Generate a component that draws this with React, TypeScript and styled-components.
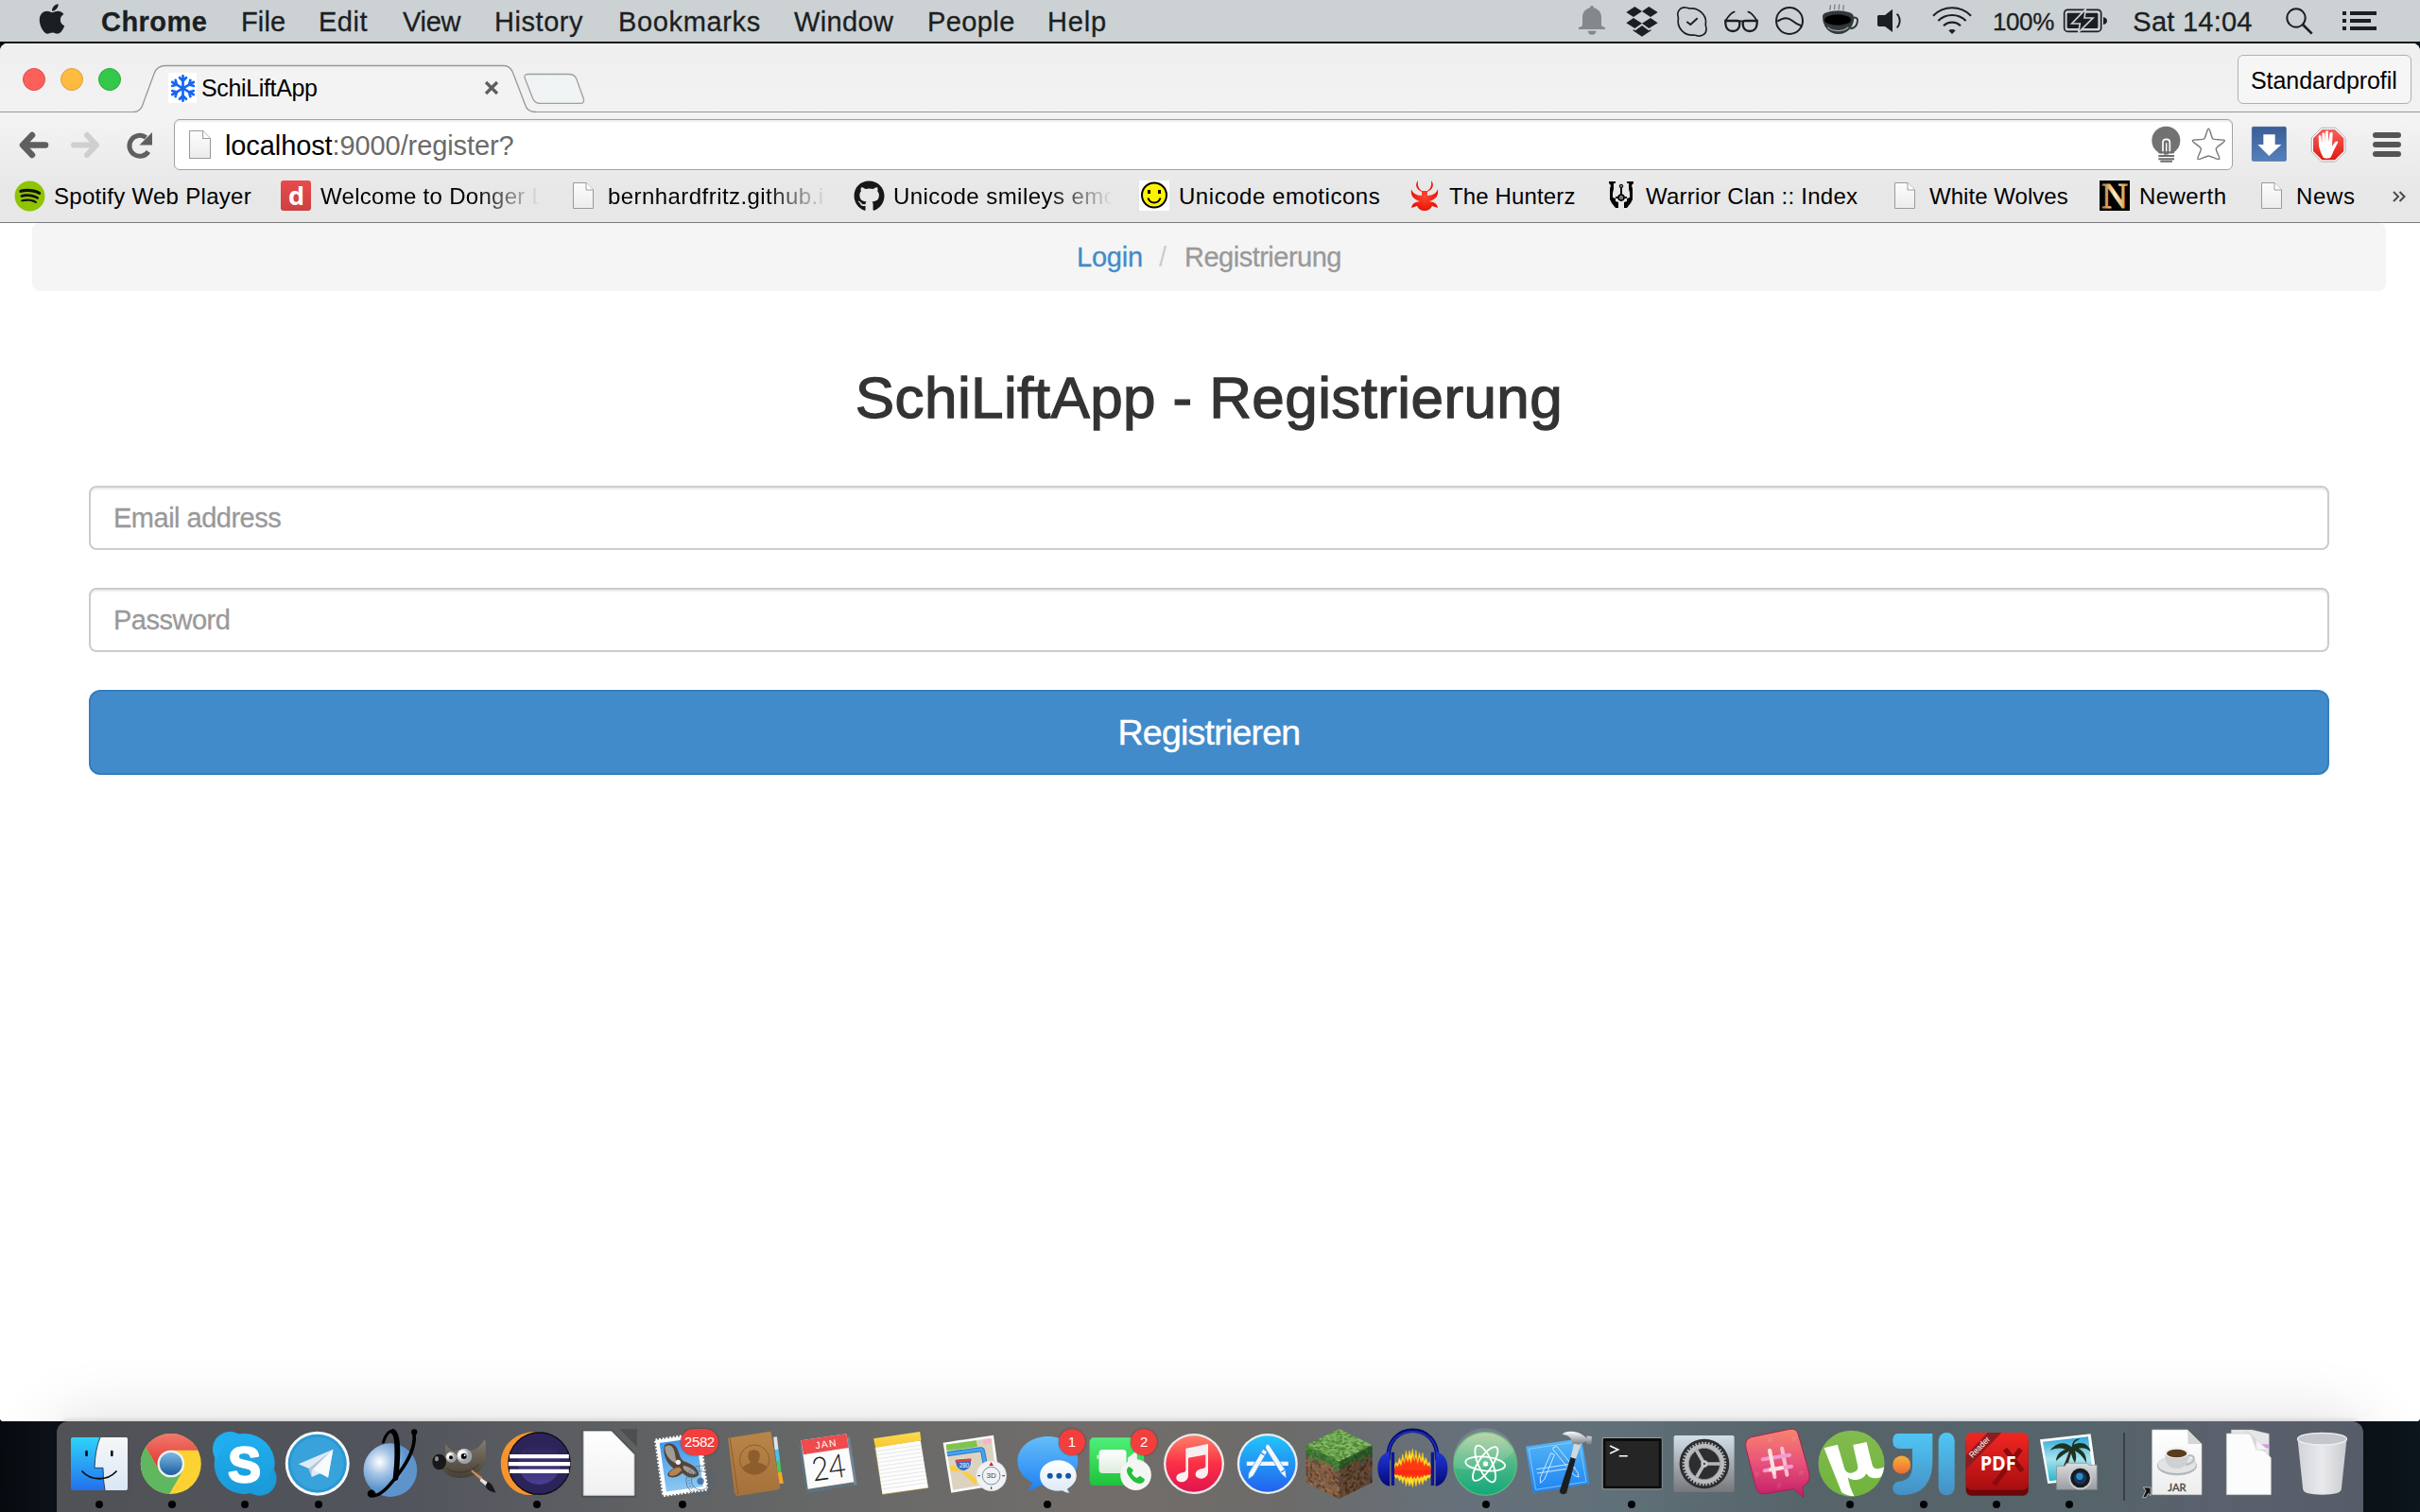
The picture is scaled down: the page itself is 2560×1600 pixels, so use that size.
import React from 'react';
import styled, { createGlobalStyle, css } from 'styled-components';
import { FaApple, FaGithub, FaSpotify, FaRegSnowflake } from 'react-icons/fa';

const GlobalStyle = createGlobalStyle`
  * { box-sizing: border-box; }
  html, body { margin: 0; padding: 0; overflow: hidden; }
  body { font-family: 'Liberation Sans', Arial, sans-serif; background: #0a0f15; }
`;

const Desktop = styled.div`
  width: 2560px;
  height: 1600px;
  display: flex;
  flex-direction: column;
  background: linear-gradient(90deg, #070b10 0, #0c1218 50px, #0c1218 2500px, #0c161c 2560px);
  overflow: hidden;
`;

/* ---------- menu bar ---------- */

const MenuBar = styled.header`
  height: 44px;
  flex: none;
  display: flex;
  align-items: center;
  margin-bottom: 2px;
  background: #ccd1d4;
  color: #1b1f22;
`;
const AppleSlot = styled.div`
  width: 107px;
  height: 44px;
  flex: none;
  display: flex;
  padding: 2px 0 0 37px;
`;
const MenuItem = styled.span<{ $w: number; $ls: number; $bold?: boolean }>`
  width: ${p => p.$w}px;
  flex: none;
  padding-top: 1px;
  font-size: 29px;
  line-height: 44px;
  font-weight: ${p => (p.$bold ? 700 : 400)};
  letter-spacing: ${p => p.$ls}px;
  white-space: nowrap;
  -webkit-text-stroke: 0.300px #1b1f22;
`;
const StatusArea = styled.div`
  display: flex;
  align-items: center;
  margin-left: auto;
  width: 894px;
`;
const StatusSvg = styled.svg`
  display: block;
  flex: none;
  height: 44px;
`;
const StatusText = styled.span<{ $w: number; $size: number; $ls?: number; $pad?: number }>`
  width: ${p => p.$w}px;
  flex: none;
  padding: 1px 0 0 ${p => p.$pad || 0}px;
  font-size: ${p => p.$size}px;
  line-height: 44px;
  letter-spacing: ${p => p.$ls || 0}px;
  white-space: nowrap;
  -webkit-text-stroke: 0.300px #1b1f22;
`;

const Status = ({ x, w, children }: { x: number; w: number; children: React.ReactNode }) => (
  <StatusSvg width={w / 3} viewBox={`${x} 0 ${w} 132`}>{children}</StatusSvg>
);

const INK = '#1b1f22';

const StatusIcons = () => (
  <>
    <Status x={78} w={150}>
      <path fill="#82888b" d="M132 18c4 0 6 3 6 7 15 4 24 15 24 30v24c0 5 5 7 12 8v6H90v-6c7-1 12-3 12-8V55c0-15 9-26 24-30 0-4 2-7 6-7ZM119 98h27c-1 7-6 12-13.500 12S120 105 119 98Z" />
    </Status>
    <Status x={228} w={144}>
      <path fill={INK} d="M268 21 291 36 264 54 241 39ZM313 21 341 39 318 54 291 36ZM241 73 264 57 291 74 268 90ZM341 73 318 57 291 74 313 90ZM264 94 270 97 291 81 312 97 320 94V97L291 116 262 97Z" />
    </Status>
    <Status x={372} w={153}>
      <path fill="none" stroke={INK} strokeWidth="5" d="M405 51C401 35 414 22 430 24C436 24 438 27 443 27C472 24 497 49 493 75C492 82 495 84 495 92C495 107 483 116 469 114C464 114 462 111 456 111C427 115 402 90 406 61C407 57 406 55 405 51Z" />
      <path fill="none" stroke={INK} strokeWidth="6" d="m433 69 12 9 22-20" />
    </Status>
    <Status x={525} w={162}>
      <g fill="none" stroke={INK}>
        <path strokeWidth="7" d="M556 66h37c8 0 8 4 8 9 0 15-9 24-22 24s-22-9-23-24ZM656 66h-37c-8 0-8 4-8 9 0 15 9 24 22 24s22-9 23-24Z" />
        <path strokeWidth="5.500" d="M556 66c8-13 19-28 30-29M656 66c-8-13-19-28-30-29M598 67h16" />
      </g>
    </Status>
    <Status x={687} w={153}>
      <circle cx="759" cy="66" r="42" fill="none" stroke={INK} strokeWidth="6" />
      <path fill="none" stroke={INK} strokeWidth="6" d="M721 68c14-10 32-14 46-3 10 8 16 12 30 17" />
    </Status>
    <Status x={840} w={165}>
      <path fill="none" stroke="#777d80" strokeWidth="4" d="M889 32c-6-6 4-9-1-16M903 30c-6-6 4-9-1-16M917 30c-6-6 4-9-1-16M931 32c-6-6 4-9-1-16" />
      <path fill="#32373a" d="M864 53h100c0 28-18 55-50 55s-50-27-50-55Z" />
      <ellipse cx="913" cy="51" rx="49" ry="17" fill="#32373a" />
      <ellipse cx="912" cy="63" rx="42" ry="17" fill="#000" />
      <path fill="none" stroke="#9da2a5" strokeWidth="4" d="M880 86c12 15 50 16 66 0" />
      <path fill="none" stroke="#32373a" strokeWidth="6" d="M960 56c14-2 17 5 14 16-3 13-12 18-22 19" />
    </Status>
    <Status x={1005} w={159}>
      <path fill={INK} d="M1044 48h18l24-19v73l-24-18h-18c-4 0-6-2-6-6V54c0-4 2-6 6-6Z" />
      <path fill="none" stroke={INK} strokeWidth="5.500" d="M1100 44c12 12 12 32 0 44" />
    </Status>
    <Status x={1164} w={201}>
      <g fill="none" stroke={INK} strokeWidth="6.500">
        <path d="M1215 50a84 84 0 0 1 120 0M1231 66a63 63 0 0 1 88 0M1248 82a38 38 0 0 1 54 0" />
      </g>
      <path fill={INK} d="M1264 97c6-5 15-5 22 0l-11 11Z" />
    </Status>
  </>
);

/* ---------- browser window ---------- */

const BrowserWindow = styled.main`
  height: 1458px;
  flex: none;
  display: flex;
  flex-direction: column;
  background: #fff;
  border-radius: 8px 8px 4px 4px;
  overflow: hidden;
`;
const TabStrip = styled.div`
  height: 73px;
  flex: none;
  display: flex;
  align-items: flex-start;
  background: linear-gradient(#efefef, #f2f2f2);
  box-shadow: inset 0 1px #f8f8f8, inset 0 -1px #989898;
`;
const Lights = styled.div`
  display: flex;
  gap: 16px;
  padding: 26px 0 0 24px;
  width: 143px;
  flex: none;
`;
const Light = styled.span<{ $c: string; $b: string }>`
  width: 24px;
  height: 24px;
  border-radius: 50%;
  background: ${p => p.$c};
  border: 1px solid ${p => p.$b};
`;
const Tab = styled.div`
  position: relative;
  width: 411px;
  height: 73px;
  flex: none;
  display: flex;
  align-items: center;
  padding: 21px 0 0 35px;
`;
const TabShape = styled.svg`
  position: absolute;
  left: 0;
  top: 23px;
  overflow: visible;
`;
const Favicon = styled.span`
  position: relative;
  width: 30px;
  height: 32px;
  display: flex;
  align-items: center;
  justify-content: center;
  background: #fff;
  color: #1567f3;
`;
const TabTitle = styled.span`
  position: relative;
  width: 304px;
  padding: 1px 0 0 5px;
  font-size: 25px;
  letter-spacing: -0.350px;
  color: #000;
`;
const CloseSvg = styled.svg`
  position: relative;
`;
const ProfileButton = styled.button`
  width: 184px;
  height: 52px;
  margin: 12px 9px 0 auto;
  padding: 3px 0 0 13px;
  border: 1px solid #b0b0b0;
  border-radius: 6px;
  background: #f6f6f6;
  font: 25px 'Liberation Sans', Arial, sans-serif;
  letter-spacing: -0.070px;
  text-align: left;
  color: #000;
`;
const Chrome = styled.div`
  height: 117px;
  flex: none;
  display: flex;
  flex-direction: column;
  background: linear-gradient(#f3f3f3 0, #f3f3f3 8px, #e7e7e7 85px, #e8e8e8);
  border-bottom: 1px solid #7b7b7b;
`;
const NavBar = styled.div`
  display: flex;
  align-items: center;
  padding-top: 7px;
  height: 61px;
  flex: none;
`;
const NavSvg = styled.svg`
  display: block;
  flex: none;
`;
const Extensions = styled.div`
  display: flex;
  margin-left: 4px;
`;
const Omnibox = styled.div`
  width: 2178px;
  height: 54px;
  display: flex;
  align-items: center;
  padding: 0 7px 0 15px;
  background: #fff;
  border: 1px solid #a2a2a2;
  border-radius: 6px;
  box-shadow: inset 0 2px 1px #eee;
`;
const Url = styled.span`
  margin: 2px auto 0 15px;
  font-size: 29px;
  letter-spacing: -0.100px;
  color: #6a6a6a;
  b { font-weight: 400; color: #000; }
`;
const BookmarkBar = styled.nav`
  display: flex;
  height: 55px;
  align-items: center;
  padding-left: 15px;
`;
const Bookmark = styled.a<{ $w: number }>`
  width: ${p => p.$w}px;
  height: 34px;
  flex: none;
  display: flex;
  align-items: center;
  gap: 10px;
  margin-top: -1px;
`;
const BookmarkIcon = styled.span<{ $bg?: string; $radius?: number }>`
  width: 32px;
  height: 32px;
  flex: none;
  display: flex;
  align-items: center;
  justify-content: center;
  background: ${p => p.$bg || 'transparent'};
  border-radius: ${p => p.$radius || 0}px;
  svg { overflow: visible; }
`;
const BookmarkLabel = styled.span<{ $ls: number; $fade?: boolean }>`
  padding-top: 2px;
  font-size: 24px;
  letter-spacing: ${p => p.$ls - 0.46}px;
  white-space: nowrap;
  color: #000;
  ${p => p.$fade && css`
    width: 232px;
    mask-image: linear-gradient(90deg, #000 165px, transparent 232px);
  `}
`;

const PageIcon = ({ w = 22, h = 28 }: { w?: number; h?: number }) => (
  <svg width={w} height={h} viewBox="0 0 22 28" preserveAspectRatio="none">
    <defs>
      <linearGradient id="pg" x2="0" y2="1"><stop stopColor="#fdfdfd" /><stop offset="1" stopColor="#ececec" /></linearGradient>
    </defs>
    <path d="M.5.5H14L21.500 8V27.500H.5Z" fill="url(#pg)" stroke="#9a9a9a" />
    <path d="M14 .5V8H21.500" fill="#fff" stroke="#9a9a9a" />
  </svg>
);

const bookmarks: { w: number; ls: number; label: string; fade?: boolean; icon: React.ReactNode; bg?: string; radius?: number }[] = [
  { w: 282, ls: 0.76, label: 'Spotify Web Player', icon: <FaSpotify size={33} color="#8fc400" />, bg: 'radial-gradient(#111 60%, transparent 62%)', radius: 16 },
  {
    w: 304, ls: 0.75, label: 'Welcome to Donger L', fade: true, bg: 'linear-gradient(#e84b4b, #cc4141)', radius: 3,
    icon: <svg width="32" height="32"><text x="16.500" y="26" textAnchor="middle" fontFamily="Open Sans, sans-serif" fontWeight="700" fontSize="27" fill="#fff">d</text></svg>,
  },
  { w: 302, ls: 0.9, label: 'bernhardfritz.github.i', fade: true, icon: <PageIcon /> },
  { w: 302, ls: 0.9, label: 'Unicode smileys emo', fade: true, icon: <FaGithub size={33} color="#181616" /> },
  {
    w: 286, ls: 1, label: 'Unicode emoticons', bg: '#fff',
    icon: (
      <svg width="32" height="32">
        <circle cx="16" cy="15.500" r="13" fill="#fff200" stroke="#000" strokeWidth="2" />
        <path d="M9.500 18.500c2 6.500 11 6.500 13 0" fill="none" stroke="#000" strokeWidth="2" />
        <path d="M9 10h3v4H9zM20 10h3v4h-3z" />
      </svg>
    ),
  },
  {
    w: 208, ls: 0.6, label: 'The Hunterz',
    icon: (
      <svg width="32" height="32">
        <defs><radialGradient id="hz"><stop stopColor="#ff4a34" /><stop offset="1" stopColor="#ea1406" /></radialGradient></defs>
        <path fill="url(#hz)" d="M9 0C5 5 8 10 13 12V16C7 16 3 13 2 9C1 16 4 20 11 22C6 23 3 24 2 29L8 27C10 31 13 32 16 32S22 31 24 27L30 29C29 24 26 23 21 22C28 20 31 16 30 9C29 13 25 16 19 16V12C24 10 27 5 23 0C24 7 21 9 19 11H13C11 9 8 7 9 0Z" />
      </svg>
    ),
  },
  {
    w: 300, ls: 0.7, label: 'Warrior Clan :: Index',
    icon: (
      <svg width="32" height="32" viewBox="-2 0 32 32">
        <path d="M1 1h7v2H6v6l-1 4v5l3 1v3l3 1v6H8l-4-5-2-4V9l1-4-2-2ZM27 1h-7v2h2v6l1 4v5l-3 1v3l-3 1v6h3l4-5 2-4V9l-1-4 2-2Z" />
        <path d="M14 4v18M8 18h12" stroke="#000" strokeWidth="2" />
        <circle cx="14" cy="18" r="3" fill="#777" stroke="#000" strokeWidth="1.500" />
        <circle cx="14" cy="6" r="1.800" fill="#777" stroke="#000" />
      </svg>
    ),
  },
  { w: 222, ls: 0.5, label: 'White Wolves', icon: <PageIcon /> },
  {
    w: 166, ls: 0.9, label: 'Newerth', bg: '#000',
    icon: (
      <svg width="32" height="32">
        <defs><linearGradient id="nw"><stop stopColor="#b0621c" /><stop offset=".5" stopColor="#fff3c0" /><stop offset="1" stopColor="#c98a38" /></linearGradient></defs>
        <text x="16" y="28.500" textAnchor="middle" fontFamily="Liberation Serif, serif" fontSize="38" textLength="28" lengthAdjust="spacingAndGlyphs" fill="url(#nw)" stroke="url(#nw)">N</text>
      </svg>
    ),
  },
  { w: 144, ls: 1.1, label: 'News', icon: <PageIcon /> },
];

/* ---------- page ---------- */

const Page = styled.section`
  flex: 1;
  display: flex;
  flex-direction: column;
  padding: 0 36px 0 34px;
  background: #fff;
`;
const Breadcrumb = styled.div`
  height: 72px;
  display: flex;
  align-items: center;
  justify-content: center;
  gap: 17px;
  padding-top: 1px;
  border-radius: 8px;
  background: #f5f5f5;
  font-size: 29px;
  letter-spacing: -0.500px;
  color: #999;
  -webkit-text-stroke: 0.300px currentColor;
  a { color: #428bca; letter-spacing: -0.200px; -webkit-text-stroke: 0.300px #428bca; }
  i { font-style: normal; color: #ccc; width: 10px; -webkit-text-stroke: 0; }
`;
const Form = styled.form`
  display: flex;
  flex-direction: column;
  gap: 40px;
  padding: 80px 60px 0;
`;
const Heading = styled.h1`
  margin: 0 0 20px;
  font-size: 62px;
  line-height: 66px;
  font-weight: 400;
  letter-spacing: 0.400px;
  text-align: center;
  color: #333;
  -webkit-text-stroke: 1.300px #333;
`;
const Field = styled.input`
  height: 68px;
  width: 100%;
  padding: 1px 24px 0;
  border: 2px solid #ccc;
  border-radius: 8px;
  box-shadow: inset 0 2px 2px rgba(0, 0, 0, 0.075);
  font: 29px 'Liberation Sans', Arial, sans-serif;
  letter-spacing: -0.500px;
  &::placeholder { color: #999; opacity: 1; -webkit-text-stroke: 0.300px #999; }
`;
const Submit = styled.button`
  height: 90px;
  padding-top: 2px;
  border: 2px solid #357ebd;
  border-radius: 12px;
  background: #428bca;
  color: #fff;
  font: 37.500px 'Liberation Sans', Arial, sans-serif;
  letter-spacing: -0.770px;
  -webkit-text-stroke: 0.400px #fff;
`;

/* ---------- dock ---------- */

const DockArea = styled.footer`
  flex: 1;
  display: flex;
  padding: 0 60px;
`;
const Dock = styled.div`
  position: relative;
  flex: 1;
  display: flex;
  padding-left: 6.4px;
  border-radius: 12px 12px 0 0;
  background: linear-gradient(90deg, #505256 0, #51545c 350px, #5f6163 620px, #6a6a69 900px, #726d6a 1120px, #6c6b69 1300px, #66707a 1480px, #607078 1650px, #56646a 1850px, #55646a 2150px, #5b606d 2300px, #575c69 2440px);
  box-shadow: 0 -2px 4px rgba(0, 0, 0, 0.12), 0 0 70px rgba(0, 0, 0, 0.14);
`;
const Tile = styled.div<{ $w?: number }>`
  position: relative;
  width: ${p => p.$w || 77.2}px;
  height: 96px;
  flex: none;
  display: flex;
  justify-content: center;
  svg { flex: none; overflow: visible; }
`;
const RunningDot = styled.i`
  position: absolute;
  left: calc(50% - 4px);
  top: 84px;
  width: 8px;
  height: 8px;
  border-radius: 50%;
  background: #000;
`;
const Badge = styled.b<{ $x: number; $w: number }>`
  position: absolute;
  left: ${p => p.$x}px;
  top: 8px;
  width: ${p => p.$w}px;
  height: 28px;
  border-radius: 14px;
  background: #f23e3c;
  color: #fff;
  font-size: 15px;
  font-weight: 400;
  line-height: 28px;
  letter-spacing: -0.400px;
  text-align: center;
  box-shadow: 0 0 2px rgba(0, 0, 0, 0.5);
`;
const Separator = styled.div`
  width: 2px;
  height: 72px;
  margin: 12px 15.500px 0 18px;
  background: #393e44;
`;

type GP = { id: string; a: string; b: string; c?: string; r?: boolean };
const G = ({ id, a, b, c, r }: GP) =>
  r ? (
    <radialGradient id={id} cx=".3" cy=".35"><stop stopColor={a} />{c && <stop offset=".45" stopColor={c} />}<stop offset="1" stopColor={b} /></radialGradient>
  ) : (
    <linearGradient id={id} x2="0" y2="1"><stop stopColor={a} />{c && <stop offset=".5" stopColor={c} />}<stop offset="1" stopColor={b} /></linearGradient>
  );

const Finder = () => (
  <>
    <G id="fa" a="#2ed3fb" b="#2471ee" />
    <G id="fb" a="#f5f7f8" b="#dbe7f5" />
    <rect x="225" y="93" width="180" height="168" rx="6" fill="url(#fa)" />
    <path d="M318 93H399q6 0 6 6V255q0 6-6 6H333Q327 228 327 190H300Q302 130 318 93Z" fill="url(#fb)" />
    <path d="M318 93Q302 130 300 190H327Q327 228 333 261" fill="none" stroke="#1a2a44" strokeWidth="2.500" />
    <path d="M274.500 138v12M355 138v12" stroke="#111" strokeWidth="8" strokeLinecap="round" />
    <path d="M261 201c28 31 80 31 108 0" fill="none" stroke="#111" strokeWidth="5.500" strokeLinecap="round" />
  </>
);
const ChromeIcon = () => (
  <>
    <G id="ca" a="#f0796d" b="#e0302c" />
    <G id="cb" a="#7fb8e4" b="#1c5f9e" />
    <circle cx="543" cy="177" r="96" fill="#fcd233" />
    <path d="M463 124A96 96 0 0 0 538 273L580 200 543 177 506 198Z" fill="#5fb760" />
    <path d="M543 134H629A96 96 0 0 0 463 124L506 198 543 177Z" fill="url(#ca)" />
    <circle cx="543" cy="177" r="43" fill="#f2f2f2" />
    <circle cx="543" cy="177" r="36" fill="url(#cb)" />
  </>
);
const Skype = () => (
  <>
    <G id="ska" a="#20aef0" b="#1a9bd9" />
    <circle cx="777" cy="177" r="96" fill="url(#ska)" />
    <circle cx="731" cy="130" r="55" fill="#1faeef" /><circle cx="825" cy="224" r="54" fill="#1a9cda" />
    <circle cx="777" cy="177" r="88" fill="url(#ska)" />
    <text x="777" y="233" textAnchor="middle" fontFamily="Liberation Sans, sans-serif" fontWeight="700" fontSize="156" fill="#fff" stroke="#fff" strokeWidth="7" strokeLinejoin="round">S</text>
  </>
);
const Telegram = () => (
  <>
    <circle cx="1006" cy="176" r="102" fill="#f8fafc" />
    <circle cx="1006" cy="176" r="93" fill="#2a98d4" />
    <circle cx="1006" cy="176" r="84" fill="#38a3da" />
    <path d="M946 178 1056 131 1040 217 1014 208 988 219 979 192Z" fill="#dfeaf5" />
    <path d="M1056 131 989 193 1040 221Z" fill="#f7fafd" /><path d="M979 192 1050 136 988 198V219Z" fill="#b3c6da" />
  </>
);
const YIcon = () => (
  <>
    <G id="ya" a="#fff" b="#5e94cc" c="#a9c6e8" r />
    <circle cx="1238" cy="197" r="85" fill="url(#ya)" />
    <g fill="none" stroke="#000" strokeLinecap="round">
      <path strokeWidth="9" d="M1216 108C1222 84 1236 70 1248 72" />
      <path strokeWidth="17" d="M1247 75C1264 84 1262 160 1255 222" />
      <path strokeWidth="11" d="M1312 76C1322 120 1294 172 1254 222C1222 264 1196 284 1178 276" />
      <circle cx="1314" cy="76" r="5" fill="#000" strokeWidth="9" /><circle cx="1178" cy="272" r="8" fill="#000" strokeWidth="9" />
    </g>
  </>
);
const Gimp = () => (
  <>
    <G id="ga" a="#857c6c" b="#463f35" /><G id="gb" a="#fff" b="#9ca3a8" c="#f2f2f2" r />
    <path d="M95 115C92 130 92 140 95 150L62 165C85 205 105 222 140 222C190 222 222 190 222 150C222 120 222 105 218 98C205 122 190 133 170 136C150 128 132 130 121 138C110 134 102 125 95 115Z" fill="url(#ga)" />
    <path d="M95 190C125 212 165 208 200 180" fill="none" stroke="#2f2a22" strokeWidth="2" />
    <ellipse cx="74" cy="171" rx="22" ry="25" fill="#17191b" /><ellipse cx="66" cy="161" rx="6" ry="8" fill="#8c9094" />
    <circle cx="112" cy="156" r="17" fill="url(#gb)" /><circle cx="154" cy="153" r="24" fill="url(#gb)" />
    <circle cx="111" cy="157" r="6" /><circle cx="152" cy="153" r="9" /><circle cx="155" cy="150" r="3" fill="#fff" />
    <path d="m176 195 34 25-5 8-29-26Z" fill="#d98a55" /><path d="m207 222 20 14-6 10-18-15Z" fill="#e6e6e6" />
    <path d="M228 234c12 4 18 18 25 35-18-4-30-10-32-22Z" fill="#16181a" />
  </>
);
const Eclipse = () => (
  <>
    <G id="eb" a="#2c2255" b="#4a3f90" />
    <path d="M378 75C340 95 303 130 303 176S335 262 372 276C310 280 270 230 270 176S310 78 378 75Z" fill="#f7942e" />
    <circle cx="392" cy="176" r="98" fill="#2b2459" stroke="#0e0d1a" strokeWidth="4" />
    <circle cx="392" cy="176" r="67" fill="url(#eb)" />
    <path d="M298 147H486V160H298ZM294 171H490V184H294ZM298 194H486V207H298Z" fill="#fff" />
  </>
);
const LibreOffice = () => (
  <>
    <G id="la" a="#fff" b="#f0f0f0" />
    <path d="M530 69H624L700 146V284H527V72Z" fill="#4b4b4b" opacity=".75" />
    <path d="M533 74H622L694 148V277H533Z" fill="url(#la)" stroke="#c9c9c9" strokeWidth="3" />
    <path d="M648 67H703V124Z" fill="#4a4a4a" opacity=".8" />
  </>
);
const Mail = () => (
  <>
    <G id="ma" a="#3f97e6" b="#8cc8f2" />
    <g transform="rotate(-8 845 180)">
      <rect x="774" y="91" width="140" height="178" fill="#fff" stroke="#fff" strokeWidth="9" strokeDasharray="6 5" />
      <rect x="785" y="102" width="118" height="156" fill="url(#ma)" />
    </g>
    <path d="M790 120C798 108 818 110 828 124C838 140 838 158 850 168C872 176 896 186 900 212C886 226 862 222 848 206C836 216 820 226 802 216C798 208 806 198 820 192C800 178 784 150 790 120Z" fill="#54453a" />
    <path d="M792 124c14-12 26-2 30 14 4 16 4 28 10 40-22-8-42-30-40-54Z" fill="#a19c95" />
    <path d="M850 182c18 4 38 14 42 26-16 6-32-4-42-16Z" fill="#a19c95" />
    <path d="M806 204c8-8 18-16 32-16l8 8c-10 12-22 24-40 18Z" fill="#b58250" />
    <circle cx="834" cy="172" r="8" fill="#f1efec" />
    <g fill="none" stroke="#49637a" strokeWidth="3" opacity=".7"><circle cx="906" cy="230" r="47" /><circle cx="906" cy="230" r="30" /></g>
    <circle cx="905" cy="232" r="11" fill="#3d6b9c" opacity=".85" />
    <circle cx="906" cy="230" r="38" fill="none" stroke="#49637a" strokeWidth="8" strokeDasharray="3 6" opacity=".5" />
  </>
);
const Contacts = () => (
  <>
    <G id="coa" a="#b98548" b="#a5713a" />
    <path d="m1134 92 11-1 5 40-12 2Z" fill="#dfe3e6" /><path d="m1138 132 12-1 5 36-12 2Z" fill="#4dc0e8" /><path d="m1143 168 12-1 4 36-12 2Z" fill="#43c95e" /><path d="m1147 205 13-2 6 36-14 2Z" fill="#f5a623" />
    <path d="M990 95 1120 75q6-1 7 5L1155 252q1 6-5 7L1017 280 1010 270Z" fill="url(#coa)" />
    <path d="m996 96 26 178" stroke="#8d5d2d" strokeWidth="3" />
    <circle cx="1074" cy="164" r="47" fill="none" stroke="#8d5d2d" strokeWidth="3" />
    <path d="M1036 193c4-14 16-14 26-20-7-10-9-16-8-27 2-16 32-18 36-2 2 14-1 20-6 28 10 4 24 6 29 17-20 27-57 27-77 4Z" fill="#8d5d2d" />
  </>
);
const Calendar = () => (
  <>
    <path d="m1215 114 20-5 18 150 140-24 8 8-162 28Z" fill="#5d7382" /><path d="m1366 92 10-2 24 152-10 4Z" fill="#6f8696" />
    <path d="m1222 103 144-21 24 153-146 22Z" fill="#fbfbfb" /><path d="m1222 103 144-21 7 44-143 22Z" fill="#ee4b4c" />
    <g transform="rotate(-8 1305 170)" fontFamily="Liberation Sans, sans-serif" textAnchor="middle">
      <text x="1308" y="125" fontSize="31" textLength="66" fill="#fff">JAN</text>
      <text x="1307" y="226" fontSize="104" fontFamily="Lato, sans-serif" fontWeight="300" textLength="108" lengthAdjust="spacingAndGlyphs" fill="#222">24</text>
    </g>
  </>
);
const Notes = () => (
  <>
    <G id="na" a="#fddc55" b="#f9c62d" />
    <path d="m76 126 144-22 28 150-147 22Z" fill="#a8954f" /><path d="m79 124 143-21 24 150-145 20Z" fill="#fdfdfd" />
    <g stroke="#d0d0d0" strokeWidth="1.500">{Array.from({ length: 11 }, (_, i) => <path key={i} d={`M${82 + i * 1.9} ${137 + i * 12} ${224 + i * 1.9} ${117 + i * 12}`} />)}</g>
    <path d="m73 97 147-22 4 28-145 23Z" fill="url(#na)" />
  </>
);
const Maps = () => (
  <>
    <path d="m294 110 160-24 22 158-156 25Z" fill="#fbfbfb" /><path d="m303 116 144-21 19 142-140 23Z" fill="#dcd3bf" />
    <path d="m303 116 96-13 4 20-97 13Z" fill="#7fc34f" /><path d="m420 100 27-4 3 16-27 4Z" fill="#f2b6c9" />
    <path d="m307 146 106-15q6 0 7 6l8 42" fill="none" stroke="#2478d0" strokeWidth="15" /><path d="m307 146 106-15q6 0 7 6l8 42" fill="none" stroke="#46a4ee" strokeWidth="9" />
    <path d="m316 182 20-2q18 0 24 14l44 34-6 18-46-44-34-2Z" fill="#f9ce46" />
    <path d="m333 164 50-4c3 22-2 34-23 40-19-2-28-16-27-36Z" fill="#3a6cc4" stroke="#fff" strokeWidth="2" /><path d="m333 164 50-4 1 9-51 4Z" fill="#d9433b" />
    <text x="361" y="189" textAnchor="middle" fontSize="19" fontFamily="Liberation Sans, sans-serif" fill="#fff">280</text>
    <circle cx="447" cy="215" r="48" fill="#f1f2f4" stroke="#d8d8da" strokeWidth="2" /><circle cx="447" cy="215" r="28" fill="none" stroke="#7795a8" strokeWidth="3" />
    <path d="m447 171 7 12h-14Z" fill="#d22" /><path d="M404 213h8v4h-8zM482 213h8v4h-8zM445 250h4v8h-4z" fill="#555" />
    <text x="447" y="223" textAnchor="middle" fontSize="24" fontFamily="Liberation Sans, sans-serif" fill="#444">3D</text>
  </>
);
const Messages = () => (
  <>
    <G id="msa" a="#66bdf8" b="#1d82f5" /><G id="msb" a="#fff" b="#dce9f5" />
    <path d="M627 90c53 0 96 34 96 78s-43 80-96 80c-10 0-18-1-26-3-10 10-22 15-38 17 8-7 13-15 15-26-29-14-47-39-47-68 0-44 43-78 96-78Z" fill="url(#msa)" />
    <path d="M660 166c32 0 58 21 58 49 0 16-12 32-29 41 1 6 4 10 7 13-11 0-17-3-22-7-4 1-8 1-14 1-32 0-58-20-58-48s26-49 58-49Z" fill="url(#msb)" />
    <g fill="#1656a4"><circle cx="634" cy="215" r="9" /><circle cx="663" cy="215" r="9" /><circle cx="692" cy="215" r="9" /></g>
  </>
);
const FaceTime = () => (
  <>
    <G id="fta" a="#4ff079" b="#1fc23a" /><G id="ftb" a="#fff" b="#dcebdd" />
    <rect x="757" y="94" width="173" height="152" rx="14" fill="url(#fta)" />
    <rect x="787" y="132" width="87" height="75" rx="12" fill="url(#ftb)" /><path d="m878 158 30-24v44h-30ZM781 149h5v12h-5Z" fill="#eef5ee" />
    <circle cx="904" cy="212" r="49" fill="#f4f6f4" />
    <path d="M883 186c-9 4-10 15-3 27 9 15 23 27 38 27 10-1 14-8 14-14l-14-10c-4-1-6 4-10 6-7-2-14-9-17-16 2-4 6-7 4-11Z" fill="#22c03c" />
  </>
);
const ITunes = () => (
  <>
    <G id="ita" a="#fd7f68" b="#e0154f" c="#fb2f45" />
    <circle cx="1089" cy="177" r="96" fill="#e9e9ec" /><circle cx="1089" cy="177" r="89" fill="url(#ita)" />
    <path d="M1063 128 1134 114V201c0 14-10 23-22 23-11 0-18-6-18-13 0-11 10-17 24-19 5-1 8-3 8-8v-36l-55 10V214c0 13-10 21-21 21-10 0-17-6-17-13 0-10 9-15 19-17 8-1 11-3 11-9Z" fill="#f9eff1" />
  </>
);
const AppStore = () => (
  <>
    <G id="asa" a="#22c5fa" b="#2362ee" />
    <circle cx="1323" cy="177" r="96" fill="#e9eef3" /><circle cx="1323" cy="177" r="89" fill="url(#asa)" />
    <rect x="1257" y="170" width="132" height="13" fill="#f1f6fb" />
    <g fill="#f4f8fc" stroke="#2a8ef3" strokeWidth="2">
      <path d="m1309 130 13 9-44 76-16 11 1-19Z" /><path d="m1317 119q7-8 13 0l50 78 3 26-17-15-49-80Z" />
    </g>
    <path d="m1302 142 12 8M1366 204l12-8" stroke="#2a8ef3" strokeWidth="4" />
  </>
);

const noise = (i: number, j: number, s: number) => {
  const v = Math.sin(i * 12.9898 + j * 78.233 + s * 37.719) * 43758.5453;
  return v - Math.floor(v);
};
const dirt = ['#8a6040', '#6b4930', '#9b7050', '#5a3d28', '#7a5538', '#6e6660'];
const grass = ['#6aa84a', '#5b9440', '#7ab958', '#4f8638', '#86c463'];
const BlockFace = ({ m, kind, shade }: { m: string; kind: number; shade: number }) => (
  <g transform={`matrix(${m})`}>
    {Array.from({ length: 256 }, (_, k) => {
      const i = k % 16;
      const j = Math.floor(k / 16);
      const green = kind === 0 || j < 3 + Math.floor(noise(i, 3, kind) * 3);
      const n = noise(i, j, kind);
      const fill = green ? (kind === 0 ? grass[Math.floor(n * 5)] : ['#3d7a2e', '#2f6c30', '#4a8a38'][Math.floor(n * 3)]) : dirt[Math.floor(n * n * 5.99)];
      return <rect key={k} x={i} y={j} width="1.080" height="1.080" fill={fill} />;
    })}
    <rect width="16" height="16" fill="#000" opacity={shade} />
  </g>
);
const Minecraft = () => (
  <>
    <BlockFace m="6.5625 3.25 -6.5625 3.25 171 66" kind={0} shade={0} />
    <BlockFace m="6.5625 3.25 0 7.375 66 118" kind={1} shade={0} />
    <BlockFace m="6.5625 -3.25 0 7.375 171 170" kind={2} shade={0.28} />
  </>
);
const wave = (up: number, down: number, s: number) => {
  const top: string[] = [];
  const bottom: string[] = [];
  const steps = 22;
  for (let k = 0; k <= steps; k++) {
    const x = 347 + (k * 116) / steps;
    const env = 0.35 + 0.65 * Math.sin((Math.PI * k) / steps);
    const n = k % 2 ? 0.85 + 0.15 * noise(k, 2, s) : 0.4 + 0.25 * noise(k, 1, s);
    top.push(`${x},${203 - up * env * n}`);
    bottom.unshift(`${x},${203 + down * env * n}`);
  }
  return [...top, ...bottom].join(' ');
};
const Audacity = () => (
  <>
    <G id="aua" a="#2038d8" b="#05077a" />
    <path d="M328 165C318 40 492 40 482 165" fill="none" stroke="#050a6e" strokeWidth="13" /><path d="M328 160C320 46 490 46 482 160" fill="none" stroke="#1a2fc4" strokeWidth="5" />
    <polygon points={wave(80, 52, 1)} fill="#fde02b" stroke="#f9c21b" strokeWidth="2" /><polygon points={wave(52, 24, 5)} fill="#fb3a12" stroke="#fb6a12" />
    <path d="M347 197h116v14H347Z" fill="#fb2a12" />
    <path d="M332 138C306 145 294 165 294 192S308 245 332 248ZM478 138C504 145 516 165 516 192S502 245 478 248Z" fill="url(#aua)" />
    <path d="M337 140h10v106h-10zM463 140h10v106h-10z" fill="#0c1596" />
  </>
);
const Atom = () => (
  <>
    <G id="ata" a="#b5cf9f" b="#12a87b" c="#4cb886" />
    <circle cx="633" cy="177" r="100" fill="url(#ata)" stroke="#5fb97b" strokeWidth="4" />
    <path d="M536 190C590 205 680 190 726 135A98 98 0 0 0 536 190Z" fill="#fff" opacity=".13" />
    <g fill="none" stroke="#fff" strokeWidth="5.500">
      <ellipse cx="633" cy="177" rx="63" ry="22" transform="rotate(6 633 177)" />
      <ellipse cx="633" cy="177" rx="63" ry="22" transform="rotate(66 633 177)" />
      <ellipse cx="633" cy="177" rx="63" ry="22" transform="rotate(-56 633 177)" />
    </g>
    <circle cx="634" cy="177" r="8" fill="#fff" />
  </>
);
const Xcode = () => (
  <>
    <G id="xa" a="#56b7f6" b="#1d83f2" /><G id="xb" a="#fafafa" b="#777d82" c="#b8bcc0" />
    <path d="m762 122 177-26 25 144-178 29Z" fill="url(#xa)" /><path d="m772 130 160-24 22 128-160 25Z" fill="none" stroke="#a8dafc" strokeWidth="2" />
    <g fill="none" stroke="#c9e8fd" strokeWidth="3"><path d="m842 143 11 5-31 77-13 13-1-17ZM850 124l11-2 66 82 3 15-14-5-68-83ZM796 194l120-18M798 207l122-18" /></g>
    <path d="m905 156-35 106q-1 9 8 11 10 2 14-5l29-108Z" fill="#1d1e20" /><path d="m918 100-13 56 16 5 19-52Z" fill="#d3d7da" />
    <path d="M878 84C886 70 926 72 944 86l12 10v-8l16 3-2 24-14-1-3-8-22 10-22-4c2-16-12-26-31-28Z" fill="url(#xb)" />
  </>
);
const Terminal = () => (
  <>
    <rect x="1005" y="93" width="191" height="166" rx="6" fill="#9a9c9e" /><rect x="1008" y="96" width="186" height="160" rx="3" fill="#0b0b0b" /><rect x="1016" y="105" width="169" height="143" fill="#252525" />
    <path d="m1030 120 26 12-26 12M1059 152h27" fill="none" stroke="#fff" strokeWidth="4.500" />
  </>
);
const Preferences = () => (
  <>
    <G id="spa" a="#d3e0e8" b="#77777a" />
    <rect x="1233" y="87" width="192" height="180" rx="6" fill="url(#spa)" /><circle cx="1330" cy="177" r="79" fill="#2c2e30" />
    <circle cx="1330" cy="177" r="66" fill="none" stroke="#b5b9bc" strokeWidth="8" strokeDasharray="5.100 5.260" />
    <circle cx="1330" cy="177" r="56" fill="none" stroke="#b8bcbf" strokeWidth="15" /><circle cx="1330" cy="177" r="50" fill="none" stroke="#7b7f82" strokeWidth="2" />
    <path d="M1330 177h50M1330 177l-25-43M1330 177l-25 43" stroke="#b5b9bc" strokeWidth="11" /><circle cx="1330" cy="177" r="11" fill="#c6cacd" /><circle cx="1330" cy="177" r="4" fill="#555" />
  </>
);
const Hash = () => (
  <>
    <G id="ha" a="#f7846e" b="#c21c67" c="#e8527a" />
    <path d="M100 92 222 67q20-3 26 14l34 120q8 30-13 44l-7 5 4 34-32-27-88 15q-22 3-30-14L83 128q-7-28 17-36Z" fill="url(#ha)" stroke="#a62153" strokeWidth="3" />
    <g strokeWidth="12" strokeLinecap="round"><path d="m158 135 16 84M197 128l16 84" stroke="#f8c1cf" /><path d="m136 163 85-14M142 199l85-14" stroke="#f39ad0" /><path d="m158 135 14 70M160 196l37-6" stroke="#fbe3df" /></g>
    <g fill="#fff" opacity=".15" fontFamily="Liberation Sans, sans-serif" fontSize="28"><text x="152" y="112">#</text><text x="228" y="108">#</text><text x="110" y="218">#</text><text x="250" y="216">#</text><text x="180" y="254">#</text></g>
  </>
);
const UTorrent = () => (
  <>
    <G id="ua" a="#83bb4f" b="#6fb43c" />
    <circle cx="418" cy="176" r="105" fill="url(#ua)" />
    <path d="M331 127 374 116 396 192q6 16 22 14 24-4 20-22L423 117 466 108 484 180q5 16 22 12 14-2 16-6-2 18-10 32-10 6-26 4-14-2-20-14-10 18-32 20-18 2-27-8 4 30 20 60-22 0-40-12Z" fill="#fff" />
  </>
);
const JI = () => (
  <>
    <G id="ja" a="#4fc6f5" b="#4590c4" /><G id="jb" a="#f9b13b" b="#ee6a30" />
    <path d="M563 81H673V165C673 240 640 276 575 276q-28 0-28-22 0-18 20-21 42-2 42-52V129H570q-23 0-23-24t16-24Z" fill="url(#ja)" />
    <rect x="692" y="78" width="51" height="199" rx="25" fill="url(#ja)" /><circle cx="575" cy="180" r="28.500" fill="url(#jb)" />
  </>
);
const Pdf = () => (
  <>
    <G id="pa" a="#f22722" b="#a80d10" />
    <rect x="781" y="90" width="198" height="188" rx="16" fill="#6b0609" /><rect x="781" y="78" width="198" height="182" rx="18" fill="url(#pa)" />
    <path d="M850 78H894L781 196V150Z" fill="#8d1c1e" />
    <path d="M870 244 955 130M905 130 960 200" stroke="#8c0b0e" strokeWidth="16" />
    <text transform="translate(802 160) rotate(-46)" fontFamily="Liberation Sans, sans-serif" fontSize="27" textLength="82" lengthAdjust="spacingAndGlyphs" fill="#fff">Reader</text>
    <text x="883" y="199" textAnchor="middle" fontFamily="Open Sans, sans-serif" fontWeight="700" fontSize="62" textLength="114" lengthAdjust="spacingAndGlyphs" fill="#fff">PDF</text>
  </>
);
const Photo = () => (
  <>
    <G id="pha" a="#2fa7dc" b="#28b5c9" c="#a7e3ee" /><G id="phb" a="#dcdddf" b="#9a9ca0" />
    <path d="m1015 100 161-18 20 142-156 16Z" fill="#fcfcfc" /><path d="m1024 107 144-16 16 124-139 17Z" fill="url(#pha)" />
    <path d="M1110 130c-6 20-14 40-22 60l12 2c6-24 12-40 18-60Z" fill="#3a2a1a" />
    <path d="M1116 124c-24-22-52-12-68 10 20-8 34-8 48-2-20 6-28 18-30 36 16-16 30-26 46-34 4 16 6 26 14 40 6-14 4-26 0-38 16 8 26 20 36 38 2-24-8-36-24-46 14-4 26 0 38 10-6-24-28-34-54-22 4-10 12-14 20-18-16-2-24 8-26 26Z" fill="#1d3320" />
    <path d="M1068 184h26l6-9h64l8 6h24v78h-128Z" fill="url(#phb)" stroke="#85878a" strokeWidth="2" />
    <circle cx="1143" cy="222" r="37" fill="#c8cacd" /><circle cx="1143" cy="222" r="31" fill="#17191c" /><circle cx="1143" cy="222" r="20" fill="#14365c" /><circle cx="1141" cy="217" r="11" fill="#2d8cc8" />
  </>
);
const Jar = () => (
  <>
    <G id="jra" a="#fff" b="#ededed" />
    <path d="M1370 69H1482L1527 114V275H1370Z" fill="url(#jra)" stroke="#c8c8c8" strokeWidth="2" /><path d="m1482 69 45 45h-43Z" fill="#d6d6d6" />
    <ellipse cx="1449" cy="183" rx="63" ry="31" fill="#b4b5b7" /><ellipse cx="1449" cy="180" rx="60" ry="27" fill="#e2e3e4" />
    <path d="M1410 140c0 30 10 52 38 52s38-22 38-52Z" fill="#cfd0d2" /><path d="M1484 152c22-8 30 22-8 28" fill="none" stroke="#bdbec0" strokeWidth="7" />
    <ellipse cx="1448" cy="142" rx="39" ry="18" fill="#f1f1f1" /><ellipse cx="1448" cy="144" rx="32" ry="13" fill="#5c3d1e" />
    <text x="1449" y="264" textAnchor="middle" fontFamily="Lato, sans-serif" fontSize="35" textLength="58" lengthAdjust="spacingAndGlyphs" fill="#444" stroke="#444">JAR</text>
    <path d="M1342 252h23v26l-7-7-8 13h-10l10-21Z" fill="#111" stroke="#eee" strokeWidth="2" />
  </>
);
const Docs = () => (
  <>
    <path d="M1621 69h66l54 13v190h-120Z" fill="#e6e6e8" stroke="#bbb" /><path d="M1715 115h26v12h-26Z" fill="#d49be0" />
    <path d="M1606 81H1680L1747 158V275H1606Z" fill="#fcfcfc" stroke="#c6c6c8" strokeWidth="2" /><path d="m1680 81 20 52q28-2 47 25Z" fill="#d9d9da" /><path d="m1664 70 36 30v33h38Z" fill="#f4f4f4" stroke="#c2c2c2" />
  </>
);
const Trash = () => (
  <>
    <defs><linearGradient id="tra"><stop stopColor="#d8dade" /><stop offset=".5" stopColor="#f1f1f3" /><stop offset="1" stopColor="#cfd1d5" /></linearGradient></defs>
    <path d="M1833 98 1850 258q3 17 61 17t61-17L1989 98Z" fill="url(#tra)" opacity=".95" />
    <ellipse cx="1911" cy="98" rx="78" ry="19" fill="#c3c6ca" stroke="#eff0f2" strokeWidth="4" />
  </>
);

type App = { x: number; art: React.ReactNode; on?: boolean; badge?: [string, number, number] };
const apps: App[] = [
  { x: 195, art: <Finder />, on: true },
  { x: 426.6, art: <ChromeIcon />, on: true },
  { x: 658.2, art: <Skype />, on: true },
  { x: 889.8, art: <Telegram />, on: true },
  { x: 1121.4, art: <YIcon /> },
  { x: 33, art: <Gimp /> },
  { x: 264.6, art: <Eclipse />, on: true },
  { x: 496.2, art: <LibreOffice /> },
  { x: 727.8, art: <Mail />, on: true, badge: ['2582', 36, 40] },
  { x: 959.4, art: <Contacts /> },
  { x: 1191, art: <Calendar /> },
  { x: 42.6, art: <Notes /> },
  { x: 274.2, art: <Maps /> },
  { x: 505.8, art: <Messages />, on: true, badge: ['1', 50, 28] },
  { x: 737.4, art: <FaceTime />, badge: ['2', 49, 28] },
  { x: 969, art: <ITunes /> },
  { x: 1200.6, art: <AppStore /> },
  { x: 52.2, art: <Minecraft /> },
  { x: 283.8, art: <Audacity /> },
  { x: 515.4, art: <Atom />, on: true },
  { x: 747, art: <Xcode /> },
  { x: 978.6, art: <Terminal />, on: true },
  { x: 1210.2, art: <Preferences /> },
  { x: 61.8, art: <Hash /> },
  { x: 293.4, art: <UTorrent />, on: true },
  { x: 525, art: <JI />, on: true },
  { x: 758, art: <Pdf />, on: true },
  { x: 988.2, art: <Photo />, on: true },
];
const stacks: App[] = [
  { x: 1326, art: <Jar /> },
  { x: 1557, art: <Docs /> },
  { x: 1789.5, art: <Trash /> },
];

const DockTile = ({ x, art, on, badge }: App) => (
  <Tile>
    <svg width="80" height="96" viewBox={`${x} 42 240 288`}>{art}</svg>
    {badge && <Badge $x={badge[1]} $w={badge[2]}>{badge[0]}</Badge>}
    {on && <RunningDot />}
  </Tile>
);

const menus: [string, number, number][] = [
  ['File', 82, 0.15], ['Edit', 89, 0.5], ['View', 97, -0.3], ['History', 131, 0.55], ['Bookmarks', 186, 0.65],
  ['Window', 141, 0.35], ['People', 127, 0.4], ['Help', 70, 0.8],
];

export default function App() {
  return (
    <Desktop>
      <GlobalStyle />
      <MenuBar>
        <AppleSlot><FaApple size={36} /></AppleSlot>
        <MenuItem $w={148} $ls={0.45} $bold>Chrome</MenuItem>
        {menus.map(([label, w, ls]) => <MenuItem key={label} $w={w} $ls={ls}>{label}</MenuItem>)}
        <StatusArea>
          <StatusIcons />
          <StatusText $w={84.3} $size={26} $ls={-0.4} $pad={13}>100%</StatusText>
          <Status x={267} w={231}>
            <rect x="281" y="31" width="117" height="69" rx="11" fill="none" stroke={INK} strokeWidth="5" />
            <path d="M405 54q12 3 12 12t-12 12Z" fill={INK} />
            <rect x="290" y="41" width="98" height="49" rx="4" fill={INK} />
            <path d="M349 29 305 75H331L326 103 372 57H345Z" fill={INK} stroke="#ccd1d4" strokeWidth="5" />
          </Status>
          <StatusText $w={146.7} $size={29} $ls={0.25}>Sat 14:04</StatusText>
          <Status x={939} w={471}>
            <circle cx="1017" cy="57" r="29" fill="none" stroke={INK} strokeWidth="6" />
            <path d="m1038 78 29 29" stroke={INK} strokeWidth="8" />
            <path fill={INK} d="M1164 36h12v12h-12zM1188 36h84v12h-84zM1164 60h12v12h-12zM1188 60h66v12h-66zM1164 84h12v12h-12zM1188 84h84v12h-84z" />
          </Status>
        </StatusArea>
      </MenuBar>

      <BrowserWindow>
        <TabStrip>
          <Lights>
            <Light $c="#fc605b" $b="#e24b46" />
            <Light $c="#fdbc40" $b="#dea034" />
            <Light $c="#34c84a" $b="#27aa35" />
          </Lights>
          <Tab>
            <TabShape width="422" height="50">
              <path d="M0 49.500Q5 49 7.500 43L20 9Q23 .5 32 .5H390Q397 .5 400 9L413 43Q415 49 422 49.500V51H0Z" fill="#f3f3f3" />
              <path d="M-2 49.500Q5 49.500 7.500 43L20 9Q23 .5 32 .5H390Q397 .5 400 9L413 43Q415 49.500 424 49.500" fill="none" stroke="#989898" strokeWidth="1.300" />
            </TabShape>
            <Favicon><FaRegSnowflake size={29} /></Favicon>
            <TabTitle>SchiLiftApp</TabTitle>
            <CloseSvg width="16" height="16"><path d="m2 2 12 12M14 2 2 14" stroke="#5e5e5e" strokeWidth="3.200" /></CloseSvg>
          </Tab>
          <NavSvg width="66" height="64" viewBox="554 46 66 64">
            <path d="M559 78.500H602Q608 78.500 610 84L617.500 105Q618 109.500 614 109.500H571Q566 109.500 563.500 104L555 82Q554.500 78.500 559 78.500Z" fill="#f0f4f4" stroke="#9f9f9f" strokeWidth="1.300" />
          </NavSvg>
          <ProfileButton>Standardprofil</ProfileButton>
        </TabStrip>

        <Chrome>
          <NavBar>
            <NavSvg width="184" height="54" viewBox="0 126 184 54">
              <path d="M34 143 24 153.500 34 164M25 153.500H48" fill="none" stroke="#5f5f5f" strokeWidth="6.500" strokeLinecap="round" strokeLinejoin="round" />
              <path d="M92 143 102 153.500 92 164M101 153.500H78" fill="none" stroke="#cfcfcf" strokeWidth="6" strokeLinecap="round" strokeLinejoin="round" />
              <path d="M157 160.500A11 11 0 1 1 154.500 145.500" fill="none" stroke="#5f5f5f" strokeWidth="5" />
              <path d="M161 140V153.500H147.500Z" fill="#5f5f5f" />
            </NavSvg>
            <Omnibox>
              <PageIcon w={23} h={30} />
              <Url><b>localhost</b>:9000/register?</Url>
              <NavSvg width="80" height="52" viewBox="550 381 240 156">
                <circle cx="602" cy="446" r="45" fill="#727272" />
                <path d="M592 492V452q0-10 11-10t11 10v40" fill="none" stroke="#fff" strokeWidth="5" />
                <path d="M603 454v28" stroke="#fff" strokeWidth="4" />
                <path d="M578 481h50v6h-50zM578 492h50v6h-50zM578 502h50v6h-50zM584 509h38v6h-38z" fill="#6d6d6d" />
                <path d="M737 409c5 0 9 28 14 32 5 4 35 0 37 5s-25 19-27 26c-2 6 14 29 10 33s-27-10-34-10-30 14-34 10 12-27 10-33c-2-7-29-21-27-26s32-1 37-5 9-32 14-32Z" fill="#fff" stroke="#7c7c7c" strokeWidth="4.500" />
              </NavSvg>
            </Omnibox>
            <Extensions>
              <NavSvg width="190" height="54" viewBox="828 378 570 162">
                <defs><linearGradient id="dl" x2="0" y2="1"><stop stopColor="#3a5d94" /><stop offset="1" stopColor="#5580be" /></linearGradient><linearGradient id="hd" x2="0" y2="1"><stop stopColor="#f4625a" /><stop offset="1" stopColor="#e01a14" /></linearGradient></defs>
                <rect x="877" y="403" width="108" height="108" rx="4" fill="url(#dl)" stroke="#34568c" strokeWidth="2" />
                <path d="M913 427h37v32h20l-39 36-36-36h18Z" fill="#fff" />
                <path d="M1097 406h45l31 31v45l-31 31h-45l-31-31v-45Z" fill="#fff" stroke="#8b8b8b" strokeWidth="2" />
                <path d="M1099 411h41l28 28v41l-28 28h-41l-28-28v-41Z" fill="url(#hd)" />
                <path d="M1103 500c-6-12-13-26-14-38l-1-30q4-6 8 0l3 24V424q5-6 9 0l2 26v-32q5-6 9 0v32l5-28q5-5 9 0l-2 42 10-14q6-4 9 1l-16 32c-2 7-5 12-8 17q-12 5-23 0Z" fill="#fff" />
                <path d="M1269 429h72M1269 459h72M1269 489h72" stroke="#555" strokeWidth="18" strokeLinecap="round" />
              </NavSvg>
            </Extensions>
          </NavBar>
          <BookmarkBar>
            {bookmarks.map(b => (
              <Bookmark key={b.label} $w={b.w}>
                <BookmarkIcon $bg={b.bg} $radius={b.radius}>{b.icon}</BookmarkIcon>
                <BookmarkLabel $ls={b.ls} $fade={b.fade}>{b.label}</BookmarkLabel>
              </Bookmark>
            ))}
            <svg width="14" height="12"><path d="m1 1 5 5-5 5M7.500 1l5 5-5 5" fill="none" stroke="#4c4c4c" strokeWidth="2" /></svg>
          </BookmarkBar>
        </Chrome>

        <Page>
          <Breadcrumb><a>Login</a><i>/</i><span>Registrierung</span></Breadcrumb>
          <Form>
            <Heading>SchiLiftApp - Registrierung</Heading>
            <Field placeholder="Email address" />
            <Field placeholder="Password" />
            <Submit type="button">Registrieren</Submit>
          </Form>
        </Page>
      </BrowserWindow>

      <DockArea>
        <Dock>
          {apps.map(a => <DockTile key={a.x} {...a} />)}
          <Separator />
          {stacks.map(a => <DockTile key={a.x} {...a} />)}
        </Dock>
      </DockArea>
    </Desktop>
  );
}
